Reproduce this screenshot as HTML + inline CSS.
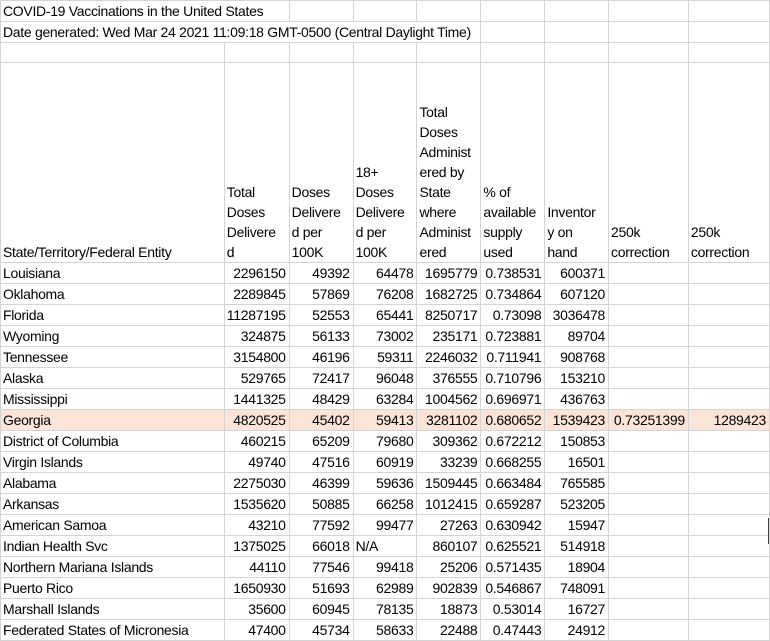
<!DOCTYPE html>
<html><head><style>
body{margin:0;background:#fff;width:770px;height:620px;overflow:hidden}
table{border-collapse:collapse;table-layout:fixed;font-family:"Liberation Sans",Arial,sans-serif;font-size:14px;letter-spacing:-0.3px;color:#000;position:absolute;left:0;top:0}
td{border:1px solid #d4d4d4;height:19px;line-height:20px;padding:0 2px;white-space:nowrap;overflow:hidden}
td.n{text-align:right;padding-right:3px}
tr.h td{height:199px;vertical-align:bottom;line-height:20px}
tr.g td{background:#fce4d6}
</style></head><body>
<table>
<colgroup><col style="width:224px"><col style="width:64px"><col style="width:64px"><col style="width:64px"><col style="width:64px"><col style="width:64px"><col style="width:64px"><col style="width:80px"><col style="width:82px"></colgroup>
<tr><td colspan="2">COVID-19 Vaccinations in the United States</td><td></td><td></td><td></td><td></td><td></td><td></td><td></td></tr>
<tr><td colspan="5">Date generated: Wed Mar 24 2021 11:09:18 GMT-0500 (Central Daylight Time)</td><td></td><td></td><td></td><td></td></tr>
<tr><td></td><td></td><td></td><td></td><td></td><td></td><td></td><td></td><td></td></tr>
<tr class="h"><td>State/Territory/Federal Entity</td><td>Total<br>Doses<br>Delivere<br>d</td><td>Doses<br>Delivere<br>d per<br>100K</td><td>18+<br>Doses<br>Delivere<br>d per<br>100K</td><td>Total<br>Doses<br>Administ<br>ered by<br>State<br>where<br>Administ<br>ered</td><td>% of<br>available<br>supply<br>used</td><td>Inventor<br>y on<br>hand</td><td>250k<br>correction</td><td>250k<br>correction</td></tr>
<tr><td>Louisiana</td><td class="n">2296150</td><td class="n">49392</td><td class="n">64478</td><td class="n">1695779</td><td class="n">0.738531</td><td class="n">600371</td><td></td><td></td></tr>
<tr><td>Oklahoma</td><td class="n">2289845</td><td class="n">57869</td><td class="n">76208</td><td class="n">1682725</td><td class="n">0.734864</td><td class="n">607120</td><td></td><td></td></tr>
<tr><td>Florida</td><td class="n">11287195</td><td class="n">52553</td><td class="n">65441</td><td class="n">8250717</td><td class="n">0.73098</td><td class="n">3036478</td><td></td><td></td></tr>
<tr><td>Wyoming</td><td class="n">324875</td><td class="n">56133</td><td class="n">73002</td><td class="n">235171</td><td class="n">0.723881</td><td class="n">89704</td><td></td><td></td></tr>
<tr><td>Tennessee</td><td class="n">3154800</td><td class="n">46196</td><td class="n">59311</td><td class="n">2246032</td><td class="n">0.711941</td><td class="n">908768</td><td></td><td></td></tr>
<tr><td>Alaska</td><td class="n">529765</td><td class="n">72417</td><td class="n">96048</td><td class="n">376555</td><td class="n">0.710796</td><td class="n">153210</td><td></td><td></td></tr>
<tr><td>Mississippi</td><td class="n">1441325</td><td class="n">48429</td><td class="n">63284</td><td class="n">1004562</td><td class="n">0.696971</td><td class="n">436763</td><td></td><td></td></tr>
<tr class="g"><td>Georgia</td><td class="n">4820525</td><td class="n">45402</td><td class="n">59413</td><td class="n">3281102</td><td class="n">0.680652</td><td class="n">1539423</td><td class="n">0.73251399</td><td class="n">1289423</td></tr>
<tr><td>District of Columbia</td><td class="n">460215</td><td class="n">65209</td><td class="n">79680</td><td class="n">309362</td><td class="n">0.672212</td><td class="n">150853</td><td></td><td></td></tr>
<tr><td>Virgin Islands</td><td class="n">49740</td><td class="n">47516</td><td class="n">60919</td><td class="n">33239</td><td class="n">0.668255</td><td class="n">16501</td><td></td><td></td></tr>
<tr><td>Alabama</td><td class="n">2275030</td><td class="n">46399</td><td class="n">59636</td><td class="n">1509445</td><td class="n">0.663484</td><td class="n">765585</td><td></td><td></td></tr>
<tr><td>Arkansas</td><td class="n">1535620</td><td class="n">50885</td><td class="n">66258</td><td class="n">1012415</td><td class="n">0.659287</td><td class="n">523205</td><td></td><td></td></tr>
<tr><td>American Samoa</td><td class="n">43210</td><td class="n">77592</td><td class="n">99477</td><td class="n">27263</td><td class="n">0.630942</td><td class="n">15947</td><td></td><td></td></tr>
<tr><td>Indian Health Svc</td><td class="n">1375025</td><td class="n">66018</td><td>N/A</td><td class="n">860107</td><td class="n">0.625521</td><td class="n">514918</td><td></td><td></td></tr>
<tr><td>Northern Mariana Islands</td><td class="n">44110</td><td class="n">77546</td><td class="n">99418</td><td class="n">25206</td><td class="n">0.571435</td><td class="n">18904</td><td></td><td></td></tr>
<tr><td>Puerto Rico</td><td class="n">1650930</td><td class="n">51693</td><td class="n">62989</td><td class="n">902839</td><td class="n">0.546867</td><td class="n">748091</td><td></td><td></td></tr>
<tr><td>Marshall Islands</td><td class="n">35600</td><td class="n">60945</td><td class="n">78135</td><td class="n">18873</td><td class="n">0.53014</td><td class="n">16727</td><td></td><td></td></tr>
<tr><td>Federated States of Micronesia</td><td class="n">47400</td><td class="n">45734</td><td class="n">58633</td><td class="n">22488</td><td class="n">0.47443</td><td class="n">24912</td><td></td><td></td></tr>
</table>
<div style="position:absolute;left:768px;top:518px;width:1px;height:26px;background:#444"></div>
</body></html>
